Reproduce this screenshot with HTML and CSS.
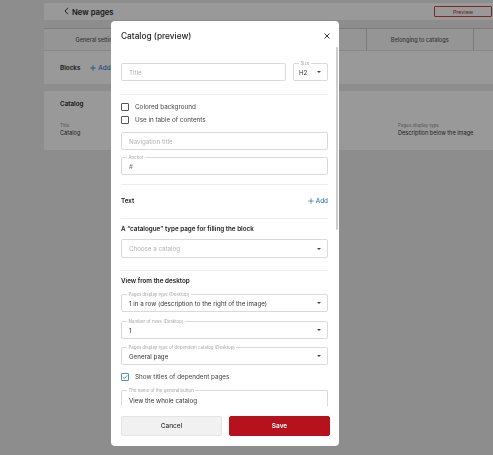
FILE: index.html
```html
<!DOCTYPE html>
<html lang="en">
<head>
<meta charset="utf-8">
<title>New pages</title>
<link rel="stylesheet" href="styles.css">
</head>
<body class="dimmed">
<div class="page">
  <div class="topbar">
    <div class="back">
      <svg class="chev" width="5" height="8" viewBox="0 0 5 8"><path d="M4 0.8 L1 4 L4 7.2" fill="none" stroke="#151515" stroke-width="0.9"/></svg>
      <span>New pages</span>
    </div>
    <div class="preview-btn">Preview</div>
  </div>
  <div class="tabs">
    <div class="tab">General settings</div>
    <div class="tab">SEO</div>
    <div class="tab">Blocks</div>
    <div class="tab">Belonging to catalogs</div>
    <div class="tab"></div>
  </div>
  <div class="card blocks-card">
    <span class="card-title">Blocks</span>
    <span class="add-link bg-add"><svg width="6" height="6" viewBox="0 0 6 6"><path d="M3 0.3V5.7M0.3 3H5.7" stroke="currentColor" stroke-width="0.8"/></svg>Add</span>
  </div>
  <div class="card catalog-card">
    <div class="card-title">Catalog</div>
    <div class="props">
      <div class="prop"><div class="prop-label">Title</div><div class="prop-value">Catalog</div></div>
      <div class="prop"><div class="prop-label">Number of rows</div><div class="prop-value">1</div></div>
      <div class="prop"><div class="prop-label">Pages display type</div><div class="prop-value">Description below the image</div></div>
    </div>
  </div>
</div>

<div class="modal">
  <div class="modal-head">
    <div class="modal-title">Catalog (preview)</div>
    <svg class="close" width="6" height="6" viewBox="0 0 6 6"><path d="M0.5 0.5L5.5 5.5M5.5 0.5L0.5 5.5" stroke="#333" stroke-width="1"/></svg>
  </div>
  <div class="modal-body">
    <div class="title-row">
      <div class="field grow"><span class="placeholder">Title</span></div>
      <div class="field size-field"><span class="float-label">Size</span><span>H2</span><span class="caret"></span></div>
    </div>
    <div class="sep sep-a"></div>
    <div class="checks">
      <label class="check"><span class="box"></span>Colored background</label>
      <label class="check"><span class="box"></span>Use in table of contents</label>
    </div>
    <div class="field nav-field"><span class="placeholder">Navigation title</span></div>
    <div class="field anchor-field"><span class="float-label">Anchor</span><span class="hash">#</span></div>
    <div class="sep sep-b"></div>
    <div class="text-row">
      <span class="section-title">Text</span>
      <span class="add-link"><svg width="6" height="6" viewBox="0 0 6 6"><path d="M3 0.3V5.7M0.3 3H5.7" stroke="currentColor" stroke-width="0.8"/></svg>Add</span>
    </div>
    <div class="sep sep-c"></div>
    <div class="section-title heading-a">A “catalogue” type page for filling the block</div>
    <div class="field catalog-select"><span class="placeholder">Choose a catalog</span><span class="caret"></span></div>
    <div class="sep sep-d"></div>
    <div class="section-title heading-b">View from the desktop</div>
    <div class="field select-1"><span class="float-label">Pages display type (Desktop)</span><span>1 in a row (description to the right of the image)</span><span class="caret"></span></div>
    <div class="field select-2"><span class="float-label">Number of rows (Desktop)</span><span>1</span><span class="caret"></span></div>
    <div class="field select-3"><span class="float-label">Pages display type of dependent catalog (Desktop)</span><span>General page</span><span class="caret"></span></div>
    <label class="check check-on"><span class="box on"><svg width="6" height="6" viewBox="0 0 6 6"><path d="M0.8 3.1L2.4 4.6L5.2 1.4" fill="none" stroke="#3f87cc" stroke-width="0.9"/></svg></span>Show titles of dependent pages</label>
    <div class="field button-name"><span class="float-label">The name of the general button</span><span class="button-value">View the whole catalog</span></div>
  </div>
  <div class="scroll-thumb"></div>
  <div class="modal-foot">
    <button class="btn btn-cancel">Cancel</button>
    <button class="btn btn-save">Save</button>
  </div>
</div>
</body>
</html>
```

FILE: styles.css
```css
* { box-sizing: border-box; }
html {
  background-color: #8d8d8d;
}
html, body {
  margin: 0;
  width: 493px;
  height: 455px;
  overflow: hidden;
}
body.dimmed {
  background-color: #8d8d8d;
  font-family: Inter, "Liberation Sans", sans-serif;
  color: #1f1f1f;
}

/* background page, dimmed as under the backdrop */
.page {
  width: 514px;
  padding: 3px 0 0 44px;
  background-color: #8d8d8d;
  height: 455px;
}
.topbar {
  height: 17px;
  background-color: #999999;
  display: flex;
  align-items: center;
  justify-content: space-between;
  padding: 0 22px 0 20px;
}
.back {
  display: flex;
  align-items: center;
  gap: 3px;
  font-size: 7.7px;
  font-weight: 600;
  color: #151515;
  margin-top: 2px;
}
.chev { margin-top: -3px; }
.preview-btn {
  width: 58px;
  height: 11px;
  border: 1px solid #7a2a2f;
  border-radius: 1px;
  display: flex;
  align-items: center;
  justify-content: center;
  font-size: 5.4px;
  color: #641a1f;
}
.tabs {
  margin-top: 8px;
  height: 23px;
  display: flex;
  background-color: #959595;
  border-top: 1px solid #7c7c7c;
  border-bottom: 1px solid #878787;
}
.tab {
  flex: none;
  width: 107.5px;
  display: flex;
  align-items: center;
  justify-content: center;
  border-right: 1px solid #7a7a7a;
  font-size: 5.6px;
  font-weight: 500;
  color: #383838;
}
.card { background-color: #999999; }
.card-title {
  font-size: 6.3px;
  font-weight: 600;
  color: #151515;
}
.blocks-card {
  height: 33px;
  display: flex;
  align-items: center;
  gap: 10px;
  padding-left: 16px;
}
.catalog-card {
  margin-top: 7px;
  height: 59px;
  padding: 9px 16px 0;
}
.props {
  display: grid;
  grid-template-columns: 169px 169px 169px;
  margin-top: 14px;
}
.prop-label { font-size: 4.6px; color: #545454; line-height: 7px; }
.prop-value { font-size: 5.6px; color: #222; line-height: 9px; }

.add-link {
  display: inline-flex;
  align-items: center;
  gap: 2px;
  font-size: 6.3px;
  font-weight: 500;
  color: #3a7ec2;
}
.bg-add { color: #1f4777; }

/* modal */
.modal {
  position: fixed;
  left: 111px;
  top: 21px;
  width: 228px;
  height: 425px;
  background: #fff;
  border-radius: 4px;
  display: flex;
  flex-direction: column;
  overflow: hidden;
}
.modal-head {
  flex: none;
  height: 29px;
  display: flex;
  align-items: center;
  justify-content: space-between;
  padding: 0 9px 0 10px;
}
.modal-title {
  font-size: 8.3px;
  font-weight: 500;
  color: #222;
}
.modal-body {
  flex: 1;
  overflow: hidden;
  padding: 13px 11px 0 10px;
}
.scroll-thumb {
  position: absolute;
  right: 1px;
  top: 26px;
  width: 2px;
  height: 183px;
  border-radius: 1px;
  background: #cdcdcd;
}

.field {
  position: relative;
  height: 18px;
  border: 1px solid #dadada;
  border-radius: 2px;
  display: flex;
  align-items: center;
  padding: 0 6px 0 7px;
  font-size: 6.2px;
  color: #333;
}
.placeholder { color: #b3b3b3; }
.hash { color: #777; }
.float-label {
  position: absolute;
  top: -3px;
  left: 5px;
  padding: 0 1.5px;
  background: #fff;
  font-size: 4.4px;
  line-height: 5px;
  color: #a3a3a3;
}
.caret {
  margin-left: auto;
  width: 0;
  height: 0;
  border-left: 2px solid transparent;
  border-right: 2px solid transparent;
  border-top: 2.5px solid #444;
}
.title-row { display: flex; gap: 7px; }
.grow { flex: 1; }
.size-field { width: 35px; flex: none; padding-left: 5px; }

.sep { height: 1px; background: #ededed; }
.sep-a { margin-top: 13px; }
.sep-b { margin-top: 9px; }
.sep-c { margin-top: 10px; }
.sep-d { margin-top: 12px; }

.checks { margin-top: 5px; }
.check {
  display: flex;
  align-items: center;
  gap: 6px;
  height: 13px;
  font-size: 6.3px;
  color: #444;
}
.box {
  width: 8px;
  height: 8px;
  border: 1px solid #555;
  border-radius: 1px;
  display: flex;
  align-items: center;
  justify-content: center;
}
.box.on { border-color: #4a8fd0; }
.check-on { margin-top: 5px; height: 14px; }

.nav-field { margin-top: 6px; }
.anchor-field { margin-top: 7px; }

.text-row {
  margin-top: 9px;
  height: 14px;
  display: flex;
  align-items: center;
  justify-content: space-between;
}
.section-title {
  font-size: 6.3px;
  font-weight: 600;
  color: #222;
  line-height: 10px;
}
.heading-a { margin-top: 5px; }
.heading-b { margin-top: 5px; }
.catalog-select { margin-top: 5px; height: 19px; }
.select-1 { margin-top: 8px; }
.select-2 { margin-top: 9px; }
.select-3 { margin-top: 8px; }
.button-name { margin-top: 6px; height: 16px; border-bottom: none; border-radius: 2px 2px 0 0; align-items: flex-end; padding-bottom: 2px; }

.modal-foot {
  flex: none;
  height: 40px;
  display: flex;
  gap: 7px;
  padding: 10px 9px 10px 10px;
}
.btn {
  flex: 1;
  height: 20px;
  border-radius: 2px;
  font-family: inherit;
  font-size: 6.5px;
  font-weight: 500;
  cursor: pointer;
}
.btn-cancel {
  background: #f1f1f1;
  border: 1px solid #e4e4e4;
  color: #333;
}
.btn-save {
  background: #b5121d;
  border: 1px solid #b5121d;
  color: #fff;
  font-weight: 600;
}
```
